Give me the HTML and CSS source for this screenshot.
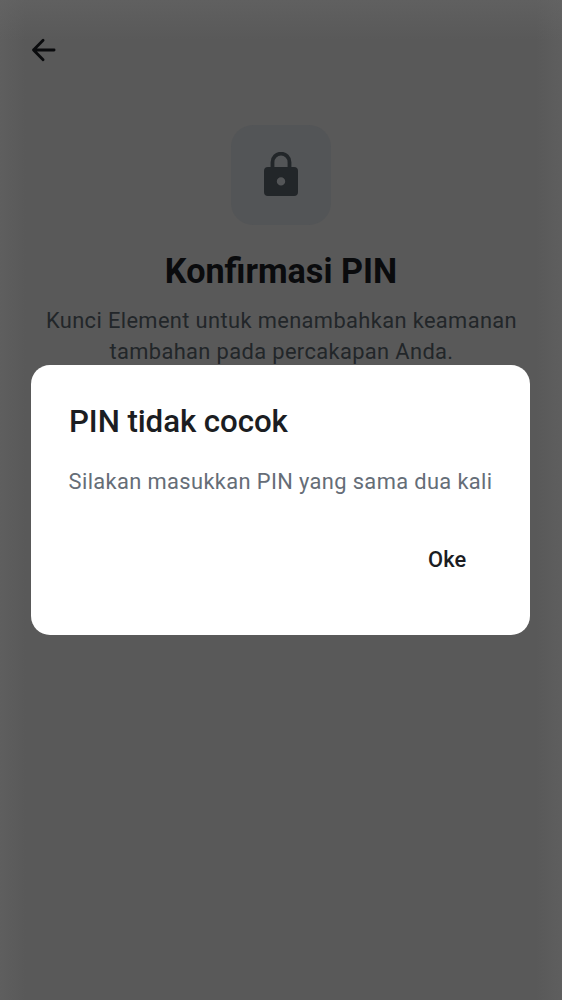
FILE: index.html
```html
<!DOCTYPE html>
<html lang="id">
<head>
<meta charset="utf-8">
<title>Konfirmasi PIN</title>
<link rel="stylesheet" href="styles.css">
</head>
<body>
<main class="screen">
  <header class="topbar">
    <svg class="back" viewBox="0 0 26 24" aria-label="Kembali"><path d="M12.1 2.2 2.5 12l9.6 9.8M2.5 12h20.6"/></svg>
  </header>
  <section class="intro">
    <div class="badge">
      <svg class="lock" viewBox="0 0 34 44"><path class="shackle" d="M8.5 17V10.2a8.5 8.5 0 0 1 17 0V17"/><path class="lock-body" fill-rule="evenodd" d="M4 15h26a4 4 0 0 1 4 4v21a4 4 0 0 1-4 4H4a4 4 0 0 1-4-4V19a4 4 0 0 1 4-4zm13 10.2a4.2 4.2 0 1 0 0 8.4 4.2 4.2 0 0 0 0-8.4z"/></svg>
    </div>
    <h1 class="title">Konfirmasi PIN</h1>
    <p class="subtitle">Kunci Element untuk menambahkan keamanan<br>tambahan pada percakapan Anda.</p>
  </section>
</main>
<div class="overlay">
  <div class="dialog" role="alertdialog">
    <h2 class="dialog-title">PIN tidak cocok</h2>
    <p class="dialog-text">Silakan masukkan PIN yang sama dua kali</p>
    <div class="actions"><button class="ok">Oke</button></div>
  </div>
</div>
</body>
</html>
```
FILE: styles.css
```css
* { box-sizing: border-box; }
body { margin: 0; font-family: Roboto, sans-serif; }
h1, h2, p { margin: 0; font-weight: 400; }
.screen {
  height: 1000px;
  overflow: hidden;
  background:
    linear-gradient(to bottom, rgba(103, 103, 103, .5), rgba(89, 89, 89, 0) 40px),
    linear-gradient(to right, rgba(100, 100, 100, .5), rgba(89, 89, 89, 0) 26px),
    linear-gradient(to left, rgba(100, 100, 100, .5), rgba(89, 89, 89, 0) 26px),
    #595959;
}
.topbar { height: 125px; padding: 38px 0 0 31px; }
.back { display: block; width: 26px; height: 24px; fill: none; stroke: #0a0b0d; stroke-width: 2.8; stroke-linecap: round; stroke-linejoin: round; }
.intro { display: flex; flex-direction: column; align-items: center; text-align: center; }
.badge { display: flex; justify-content: center; width: 100px; height: 100px; padding-top: 27px; border-radius: 22px; background: #535557; }
.lock { width: 34px; height: 44px; }
.shackle { fill: none; stroke: #222629; stroke-width: 3.8; }
.lock-body { fill: #222629; }
.title { margin-top: 24px; font-size: 34.2px; line-height: 44px; font-weight: 700; color: #0a0b0d; white-space: nowrap; }
.subtitle { margin-top: 12px; padding-left: 1px; font-size: 21.875px; line-height: 31.25px; letter-spacing: .37px; color: #222629; white-space: nowrap; }
.overlay { position: absolute; inset: 0; height: 1000px; padding: 364.7px 32px 0 31px; }
.dialog { height: 270px; padding: 37.3px 38px 0; border-radius: 19px; background: #fff; }
.dialog-title { font-size: 31.25px; line-height: 40px; font-weight: 500; letter-spacing: -.08px; color: #1b1d22; white-space: nowrap; }
.dialog-text { margin-top: 24px; margin-left: -.4px; font-size: 21.875px; line-height: 31px; letter-spacing: .37px; color: #656d77; white-space: nowrap; }
.actions { display: flex; justify-content: flex-end; margin-top: 32px; }
.ok { padding: 0 25.6px; border: 0; background: none; font: 500 21.875px/62px Roboto, sans-serif; letter-spacing: .16px; color: #1b1d22; }
```
